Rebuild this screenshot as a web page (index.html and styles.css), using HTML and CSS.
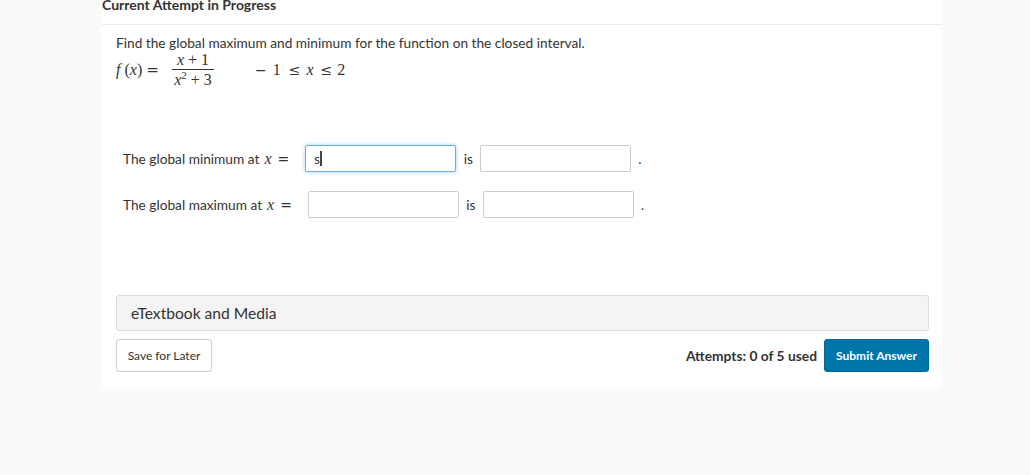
FILE: index.html
```html
<!DOCTYPE html>
<html>
<head>
<meta charset="utf-8">
<link rel="stylesheet" href="styles.css">
</head>
<body>
<div class="card">
  <div class="title">Current Attempt in Progress</div>
  <div class="content">
    <p class="question">Find the global maximum and minimum for the function on the closed interval.</p>
    <div class="formula">
      <span class="math fx"><i>f</i><span class="paren">(<i>x</i>)</span><span class="eq">=</span></span>
      <span class="frac">
        <span class="num"><i>x</i><span class="op">+</span>1</span>
        <span class="den"><i>x</i><sup>2</sup><span class="op">+</span>3</span>
      </span>
      <span class="math interval"><span class="minus">−</span><span class="n1">1</span><span class="rel">≤</span><i>x</i><span class="rel r2">≤</span>2</span>
    </div>
    <div class="rows">
      <div class="row">
        <span class="label">The global minimum at</span>
        <span class="math lx"><i>x</i><span class="eq2">=</span></span>
        <div class="field focus">s<span class="caret"></span></div>
        <span class="is">is</span>
        <div class="field"></div>
        <span class="dot">.</span>
      </div>
      <div class="row">
        <span class="label">The global maximum at</span>
        <span class="math lx"><i>x</i><span class="eq2">=</span></span>
        <div class="field"></div>
        <span class="is">is</span>
        <div class="field"></div>
        <span class="dot">.</span>
      </div>
    </div>
    <div class="media">eTextbook and Media</div>
    <div class="actions">
      <button class="btn save">Save for Later</button>
      <div class="right">
        <span class="attempts">Attempts: 0 of 5 used</span>
        <button class="btn submit">Submit Answer</button>
      </div>
    </div>
  </div>
</div>
</body>
</html>
```
FILE: styles.css
```css
html, body {
  margin: 0;
  padding: 0;
  background: #fafafa;
  height: 100%;
}
body {
  font-family: Lato, "Open Sans", sans-serif;
  color: #333;
}
.card {
  margin-left: 102px;
  width: 840px;
  background: #fff;
  padding-bottom: 16px;
}
.title {
  font-weight: bold;
  font-size: 14px;
  line-height: 16px;
  margin-top: -3px;
  height: 28px;
  border-bottom: 1px solid #ebebeb;
  box-sizing: border-box;
  color: #333;
  white-space: nowrap;
}
.content {
  padding: 0 13px 0 14px;
}
.question {
  margin: 10px 0 0;
  font-size: 13.7px;
  line-height: 16px;
  color: #333;
}
.math {
  font-family: "Liberation Serif", "DejaVu Serif", serif;
  font-size: 16px;
  color: #333;
  white-space: nowrap;
}
.formula {
  display: flex;
  align-items: center;
  height: 38px;
}
.fx {
  width: 56px;
  display: inline-flex;
  align-items: baseline;
}
.paren {
  margin-left: 4px;
}
.eq {
  margin-left: 4px;
  font-family: "DejaVu Serif", serif;
  font-size: 15px;
}
.frac {
  display: inline-flex;
  flex-direction: column;
  align-items: center;
  font-family: "Liberation Serif", "DejaVu Serif", serif;
  font-size: 16px;
  color: #333;
  width: 42px;
}
.op {
  margin: 0 4px;
}
.num {
  line-height: 14px;
  border-bottom: 1px solid #333;
  width: 100%;
  text-align: center;
  padding-bottom: 2px;
}
.den {
  line-height: 16px;
  padding-top: 2px;
}
.den sup {
  font-size: 11px;
  vertical-align: 6px;
  line-height: 0;
}
.interval {
  margin-left: 41px;
  display: inline-flex;
  align-items: baseline;
}
.minus {
  font-family: "DejaVu Serif", serif;
  font-size: 14px;
}
.n1 {
  margin-left: 6px;
}
.rel {
  font-family: "DejaVu Serif", serif;
  font-size: 14px;
  margin: 0 6px 0 8px;
}
.rel.r2 {
  margin: 0 5px 0 7px;
}
.rows {
  margin-top: 56px;
  padding-left: 7px;
}
.row {
  display: flex;
  align-items: center;
  height: 27px;
  margin-bottom: 19px;
  font-size: 13.7px;
}
.label {
  white-space: nowrap;
}
.lx {
  margin-left: 5px;
  margin-right: 16px;
}
.eq2 {
  margin-left: 6px;
  font-family: "DejaVu Serif", serif;
  font-size: 14px;
}
.field {
  width: 151px;
  height: 27px;
  box-sizing: border-box;
  border: 1px solid #ccc;
  border-radius: 2px;
  background: #fff;
  font-size: 13px;
  padding-left: 8px;
  display: flex;
  align-items: center;
  color: #333;
}
.field.focus {
  border-color: #66afe9;
  box-shadow: 0 0 4px rgba(102, 175, 233, 0.6);
}
.caret {
  display: inline-block;
  width: 2px;
  height: 15px;
  background: #444;
}
.is {
  width: 24px;
  text-align: center;
}
.dot {
  margin-left: 7px;
}
.media {
  margin-top: 77px;
  height: 36px;
  box-sizing: border-box;
  border: 1px solid #ddd;
  border-radius: 3px;
  background: #f4f4f4;
  font-size: 15.6px;
  line-height: 34px;
  padding-left: 14px;
  color: #333;
}
.actions {
  display: flex;
  justify-content: space-between;
  align-items: center;
  margin-top: 8px;
}
.right {
  display: flex;
  align-items: center;
  gap: 7px;
}
.btn {
  font-family: Lato, "Open Sans", sans-serif;
  font-size: 12px;
  height: 33px;
  border-radius: 3px;
  cursor: pointer;
}
.save {
  width: 96px;
  background: #fff;
  border: 1px solid #ccc;
  color: #333;
}
.attempts {
  font-weight: bold;
  font-size: 13.8px;
  color: #333;
}
.submit {
  width: 105px;
  background: #0075aa;
  border: 1px solid #006894;
  color: #fff;
  font-weight: bold;
}
```
